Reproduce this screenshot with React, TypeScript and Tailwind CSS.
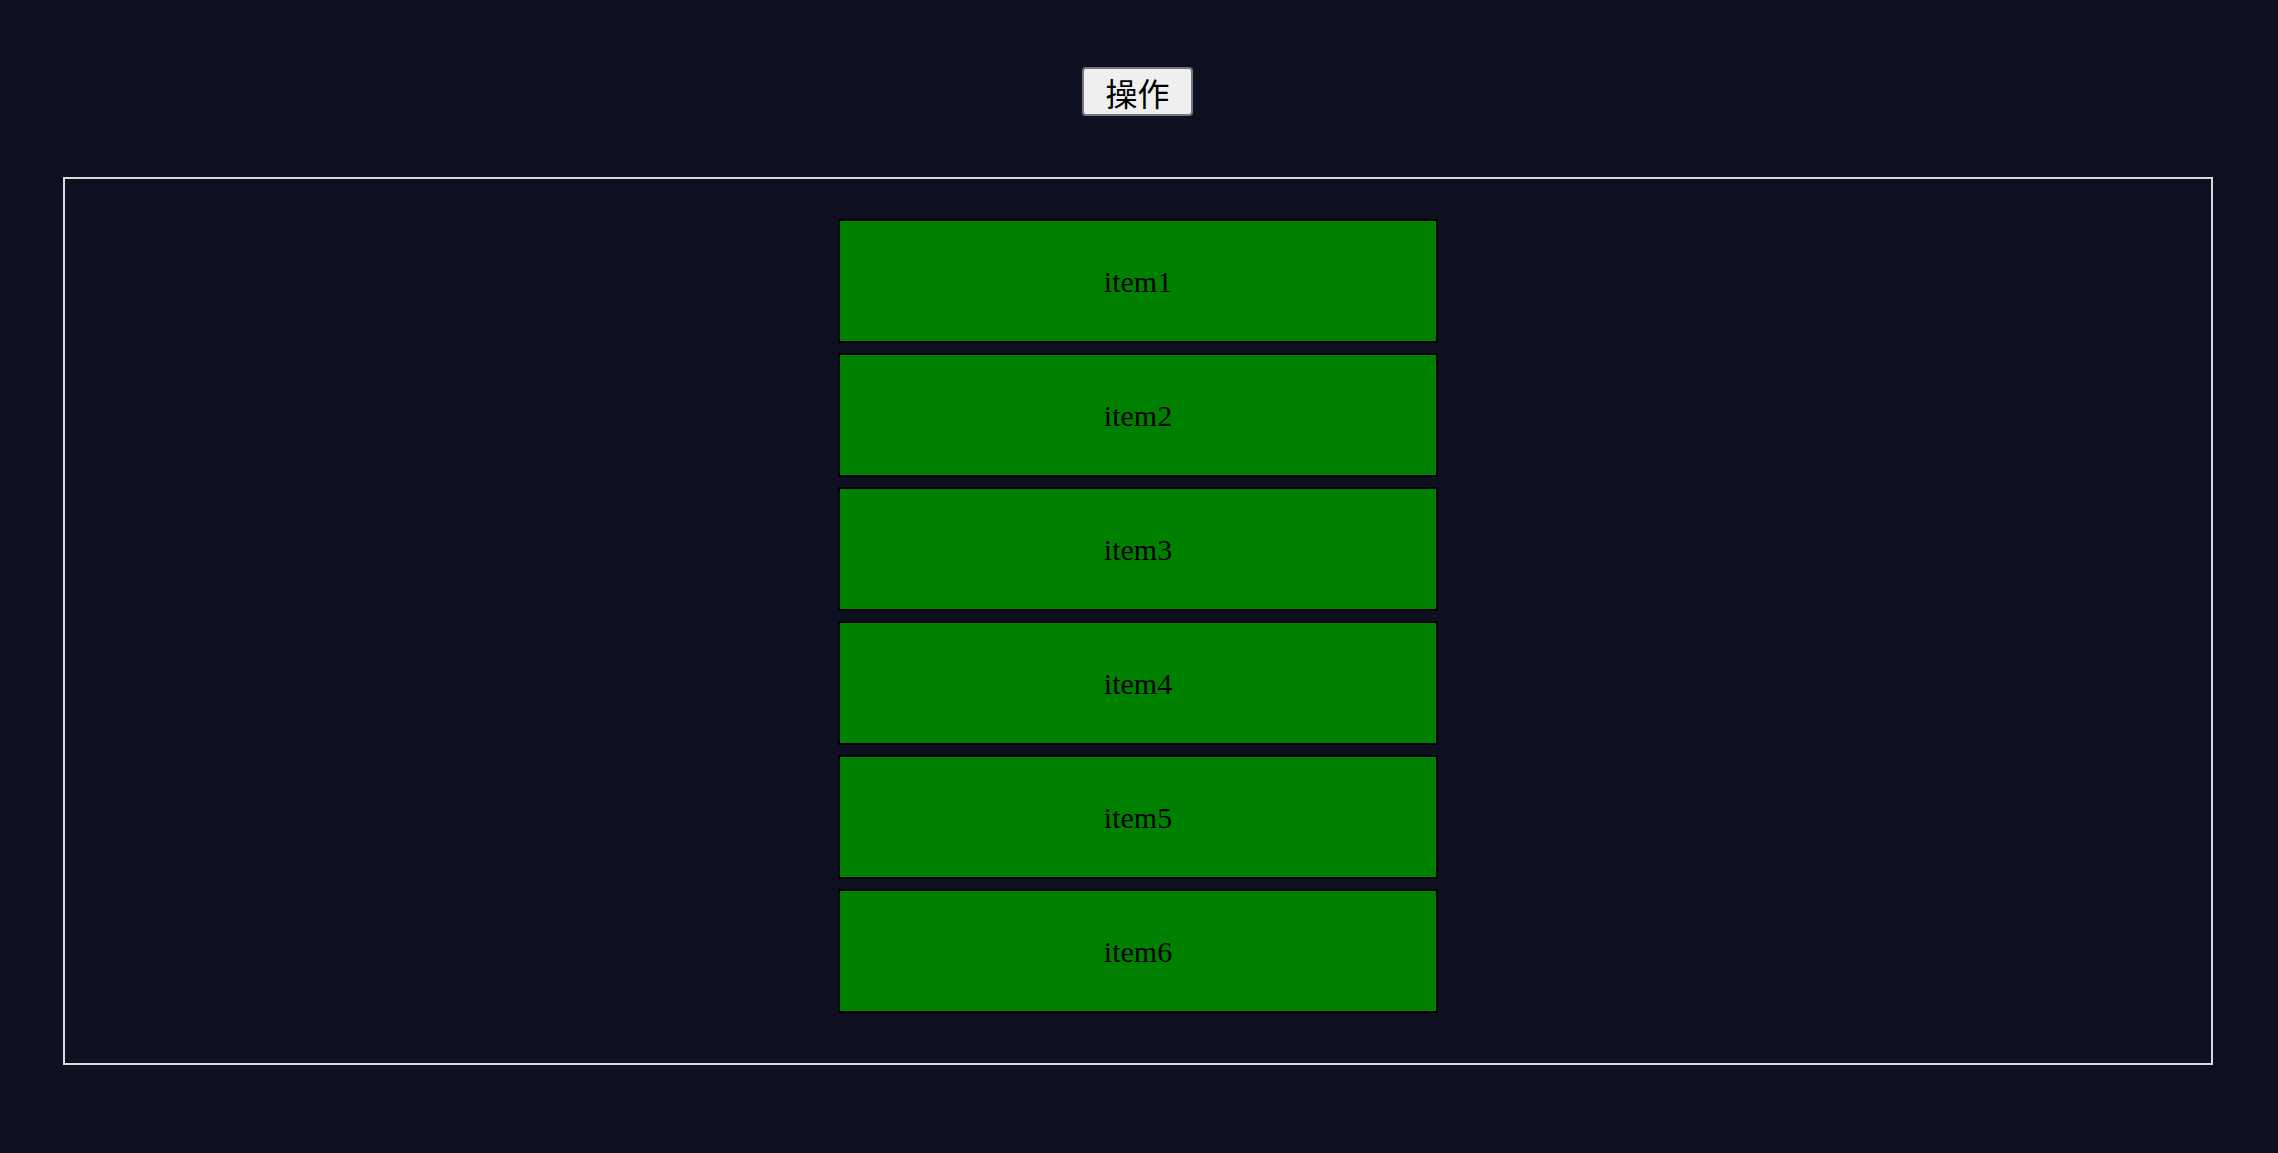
export default function App() {
  const items = ["item1", "item2", "item3", "item4", "item5", "item6"];
  return (
    <div className="min-h-[1153px] w-full bg-[#0c1020] pt-[67px]">
      <div className="flex justify-center pr-[3px]">
        <button className="flex h-[49px] w-[111px] items-center justify-center rounded-[4px] border-2 border-[#767676] bg-[#efefef] text-[32px] leading-none text-black [font-family:'Noto_Sans_CJK_SC',sans-serif]">
          操作
        </button>
      </div>
      <div className="ml-[63px] mt-[61px] w-[2150px] border-2 border-[#d9d9d9] pt-[40px] pb-[40px]">
        <div className="flex flex-col items-center">
          {items.map((it) => (
            <div
              key={it}
              className="mb-[10px] flex h-[124px] w-[600px] items-center justify-center border-2 border-black bg-[#008000] text-[30px] text-black [font-family:'Liberation_Serif',serif]"
            >
              {it}
            </div>
          ))}
        </div>
      </div>
    </div>
  );
}
